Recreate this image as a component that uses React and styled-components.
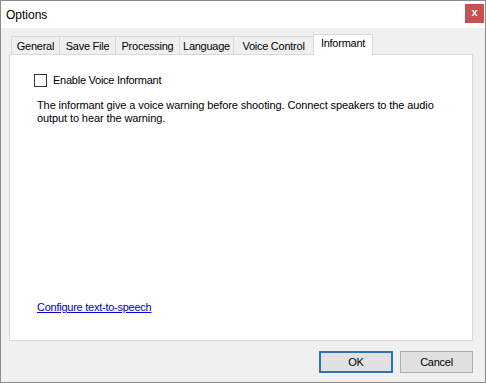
import React, { useState } from 'react';
import styled, { createGlobalStyle } from 'styled-components';

const GlobalStyle = createGlobalStyle`
  html, body {
    margin: 0;
    padding: 0;
    background: #ffffff;
  }
  * {
    box-sizing: border-box;
  }
`;

//Window frame

const Window = styled.div`
  width: 486px;
  height: 383px;
  border: 1px solid #8a8a8a;
  background: #f0f0f0;
  display: flex;
  flex-direction: column;
  font-family: "Liberation Sans", Arial, sans-serif;
  font-size: 11px;
  letter-spacing: -0.25px;
  color: #000;
`;

const TitleBar = styled.div`
  height: 27px;
  background: #ffffff;
  display: flex;
  align-items: center;
  justify-content: space-between;
  padding: 0 1px 0 5px;
`;

const Title = styled.span`
  font-size: 12px;
  letter-spacing: 0;
  color: #000;
`;

const CloseBox = styled.div`
  width: 19px;
  height: 19px;
  margin-top: -3px;
  background: #c75050;
  color: #fff;
  font-size: 11px;
  font-weight: bold;
  display: flex;
  align-items: center;
  justify-content: center;
  line-height: 1;
  padding-bottom: 2px;
`;

const Body = styled.div`
  flex: 1;
  display: flex;
  flex-direction: column;
  padding: 6px 12px 0 8px;
`;

//Tabs

const TabRow = styled.div`
  display: flex;
  align-items: flex-end;
  padding-left: 2px;
  height: 20px;
`;

const Tab = styled.div`
  width: ${p => p.w}px;
  height: ${p => (p.active ? 21 : 18)}px;
  margin-left: ${p => (p.first ? 0 : -1)}px;
  margin-bottom: ${p => (p.active ? -1 : 0)}px;
  border: 1px solid #d9d9d9;
  border-bottom: none;
  background: ${p => (p.active ? '#ffffff' : '#f0f0f0')};
  position: relative;
  z-index: ${p => (p.active ? 2 : 1)};
  display: flex;
  justify-content: center;
  align-items: ${p => (p.active ? 'flex-start' : 'center')};
  padding-top: ${p => (p.active ? 2 : 0)}px;
  white-space: nowrap;
  cursor: default;
`;

const Panel = styled.div`
  height: 287px;
  background: #ffffff;
  border: 1px solid #d9d9d9;
  display: flex;
  flex-direction: column;
  padding: 18px 0 0 24px;
  position: relative;
  z-index: 1;
`;

const CheckRow = styled.label`
  display: flex;
  align-items: center;
  gap: 6px;
  height: 14px;
`;

const Box = styled.span`
  width: 13px;
  height: 13px;
  border: 1px solid #333333;
  background: #fff;
  display: inline-block;
`;

const Description = styled.p`
  margin: 12px 0 0 3px;
  width: 415px;
  line-height: 13px;
  letter-spacing: -0.1px;
`;

const Link = styled.a`
  margin: auto 0 27px 3px;
  color: #0000cc;
  text-decoration: underline;
  cursor: pointer;
`;

//Buttons

const ButtonBar = styled.div`
  display: flex;
  justify-content: flex-end;
  gap: 7px;
  margin-top: 10px;
`;

const Button = styled.button`
  width: ${p => (p.primary ? 74 : 73)}px;
  height: 22px;
  background: #e1e1e1;
  border: ${p => (p.primary ? '2px solid #2b73b4' : '1px solid #adadad')};
  font-family: "Liberation Sans", Arial, sans-serif;
  font-size: 11px;
  letter-spacing: -0.25px;
  color: #000;
  padding: 0;
`;

const tabs = [
  { label: 'General', w: 49 },
  { label: 'Save File', w: 57 },
  { label: 'Processing', w: 65 },
  { label: 'Language', w: 55 },
  { label: 'Voice Control', w: 81 },
  { label: 'Informant', w: 60 },
];

const App = () => {
  const [active, setActive] = useState('Informant');
  const [checked, setChecked] = useState(false);

  return (<>
    <GlobalStyle />
    <Window>
      <TitleBar>
        <Title>Options</Title>
        <CloseBox>x</CloseBox>
      </TitleBar>
      <Body>
        <TabRow>
          {tabs.map((t, i) => (
            <Tab
              key={t.label}
              w={t.w}
              first={i === 0}
              active={active === t.label}
              onClick={() => setActive(t.label)}
            >
              {t.label}
            </Tab>
          ))}
        </TabRow>
        <Panel>
          <CheckRow onClick={() => setChecked(!checked)}>
            <Box>{checked ? '✓' : null}</Box>
            Enable Voice Informant
          </CheckRow>
          <Description>
            The informant give a voice warning before shooting. Connect speakers to the audio
            output to hear the warning.
          </Description>
          <Link>Configure text-to-speech</Link>
        </Panel>
        <ButtonBar>
          <Button primary>OK</Button>
          <Button>Cancel</Button>
        </ButtonBar>
      </Body>
    </Window>
  </>);
};

export default App;
